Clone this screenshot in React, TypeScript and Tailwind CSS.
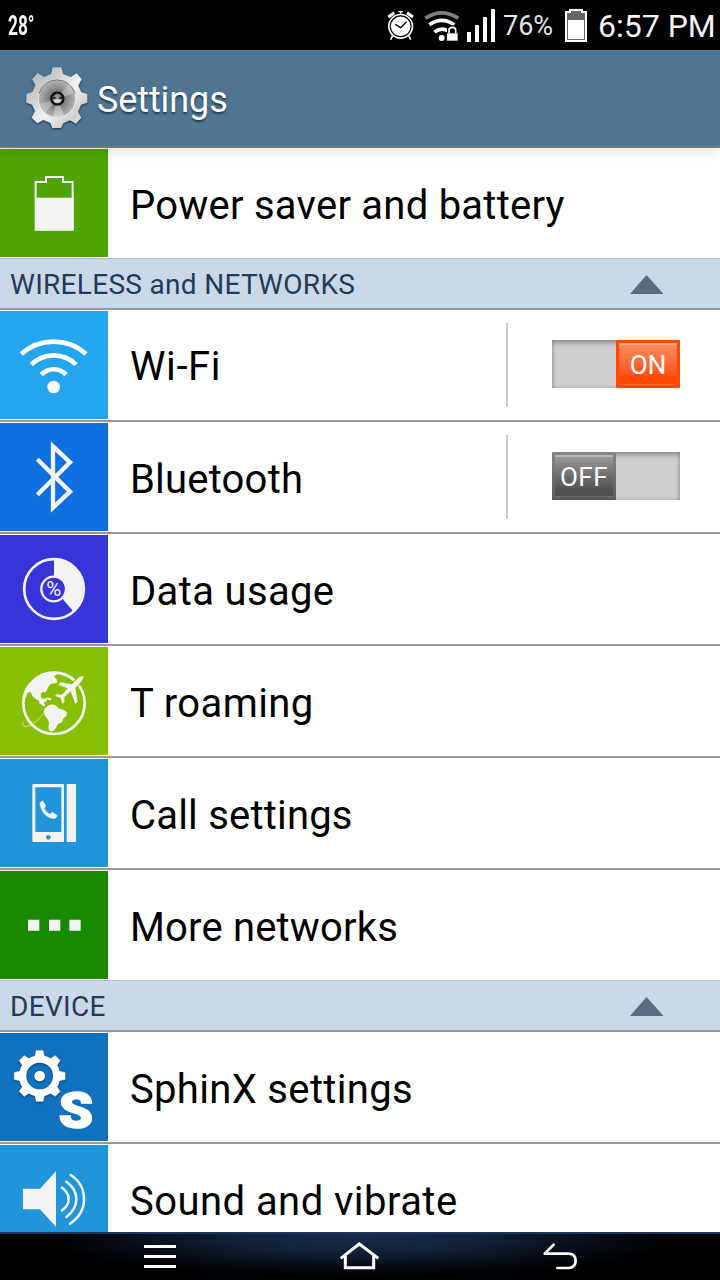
import type { ReactNode } from 'react';

type RowProps = {
  label: string;
  color: string;
  icon: ReactNode;
  last?: boolean;
  labelClass: string;
  toggle?: 'on' | 'off';
};

const GEAR_TEETH = [0, 45, 90, 135, 180, 225, 270, 315];

function AlarmIcon() {
  return (
    <svg className="h-[32px] w-[28px]" viewBox="20 28 84 96" fill="none" stroke="#fff">
      <circle cx="61" cy="80" r="35.5" strokeWidth="5" />
      <circle cx="61" cy="80" r="29.5" fill="#fff" stroke="none" />
      <path d="M45 74l16 10 18-18" stroke="#000" strokeWidth="4" />
      <path d="M61 36v9M54 36h14" strokeWidth="4" />
      <path d="M24 52L42 39M98 52L80 39" strokeWidth="9" />
      <path d="M37 108l-6 12M85 108l6 12" strokeWidth="5" />
    </svg>
  );
}

function StatusWifiIcon() {
  return (
    <svg className="h-[32px] w-[36px]" viewBox="130 28 108 96" fill="none">
      <path d="M134 56Q183 23 233 56" stroke="#808080" strokeWidth="11" />
      <path d="M146 75Q183 49 221 75" stroke="#fff" strokeWidth="11" />
      <path d="M161 97Q183 81 202 94" stroke="#fff" strokeWidth="11" />
      <circle cx="183" cy="115" r="9" fill="#fff" />
      <path d="M205 101V91a10 8 0 0 1 20 0v10" stroke="#000" strokeWidth="12" />
      <rect x="196" y="99" width="37" height="25" fill="#000" />
      <path d="M205 101V91a10 8 0 0 1 20 0v10" stroke="#fff" strokeWidth="5" />
      <rect x="199" y="101" width="32" height="22" fill="#fff" />
    </svg>
  );
}

function SignalIcon() {
  return (
    <svg className="h-[33px] w-[28px]" viewBox="261 27 84 99" fill="#fff">
      <path d="M261 96h12v30h-12zM285 75h12v51h-12zM309 51h12v75h-12zM333 27h12v99h-12z" />
    </svg>
  );
}

function StatusBatteryIcon() {
  return (
    <svg className="h-[33px] w-[22px]" viewBox="555 27 66 99">
      <path d="M555 33h12v-6h42v6h12v93h-66z" fill="#fff" />
      <path d="M561 39h12v-6h30v6h12v81h-54z" fill="#666" />
      <rect x="564" y="60" width="48" height="57" fill="#fff" />
    </svg>
  );
}

function SteelGearIcon() {
  return (
    <svg className="h-[66px] w-[66px] drop-shadow-[0_1px_1px_rgba(0,0,0,0.6)]" viewBox="72 195 198 198">
      <defs>
        <linearGradient id="steel" x1="0" y1="0" x2="1" y2="1">
          <stop offset="0" stopColor="#aeaeae" />
          <stop offset="0.35" stopColor="#d2d2d2" />
          <stop offset="0.55" stopColor="#f2f2f2" />
          <stop offset="0.8" stopColor="#cfcfcf" />
          <stop offset="1" stopColor="#e8e8e8" />
        </linearGradient>
        <radialGradient id="dish">
          <stop offset="0.3" stopColor="#6f6f6f" />
          <stop offset="0.6" stopColor="#8f8f8f" />
          <stop offset="1" stopColor="#b4b4b4" />
        </radialGradient>
      </defs>
      <path
        d="M158 202h26l6 20 22 9 18-11 15 17-10 20 9 20 18 5v26l-19 6-9 21 10 18-16 18-18-10-20 9-7 14h-26l-6-15-21-9-18 10-17-17 10-20-9-19-17-6v-26l18-6 9-20-10-18 17-19 19 12 21-9z"
        fill="url(#steel)"
      />
      <circle cx="171" cy="296" r="56" fill="url(#dish)" stroke="#e9e9e9" strokeWidth="2.5" />
      <path d="M117 281A56 56 0 0 1 225 281" fill="none" stroke="#707070" strokeWidth="3" />
      <path d="M171 296L206 252 223 280zM171 296l-35 42-16-26z" fill="#e8e8e8" opacity="0.35" />
      <path d="M171 296l-12 54q18 4 34-2z" fill="#eee" opacity="0.45" />
      <circle cx="172" cy="296" r="18" fill="#7a7a7a" stroke="#111" strokeWidth="7" />
      <path d="M158 291h28v5h-28z" fill="#222" />
      <circle cx="172" cy="291" r="6" fill="#999" />
      <path d="M160 300q12-6 24 0l-5 8h-14z" fill="#d4d4d4" />
    </svg>
  );
}

function BatteryIcon() {
  return (
    <svg className="size-[108px]" viewBox="0 12 324 324">
      <path d="M107 254V111h31V96h51v15h29v143z" fill="none" stroke="#f4f4f4" strokeWidth="6" />
      <rect x="105" y="158" width="116" height="98" fill="#f4f4f4" />
    </svg>
  );
}

function WifiIcon() {
  return (
    <svg className="size-[108px]" viewBox="0 9 324 324" fill="none" stroke="#fff" strokeWidth="14">
      <path d="M64 138a145 145 0 0 1 194 0" />
      <path d="M94 170a94 94 0 0 1 134 0" />
      <path d="M124 200a50 50 0 0 1 74 0" />
      <circle cx="161" cy="237" r="19" fill="#fff" stroke="none" />
    </svg>
  );
}

function BluetoothIcon() {
  return (
    <svg className="size-[108px]" viewBox="0 345 324 324">
      <path
        d="M112 454L210 551 159 599V415L210 463 112 560"
        fill="none"
        stroke="#f4f4f4"
        strokeWidth="13"
        strokeMiterlimit="10"
      />
    </svg>
  );
}

function DataIcon() {
  return (
    <svg className="size-[108px]" viewBox="0 9 324 324">
      <circle cx="162" cy="171" r="89.5" fill="none" stroke="#f4f4f4" strokeWidth="8" />
      <path d="M162 171V82A89 89 0 0 1 219 237z" fill="#f4f4f4" />
      <circle cx="161" cy="171" r="37" fill="#3834da" stroke="#f4f4f4" strokeWidth="7" />
      <text
        x="139"
        y="192"
        fontSize="58"
        textLength="45"
        lengthAdjust="spacingAndGlyphs"
        fill="#f4f4f4"
        className="font-[Roboto]"
      >
        %
      </text>
    </svg>
  );
}

function GlobeIcon() {
  return (
    <svg className="size-[108px]" viewBox="0 9 324 324">
      <circle cx="162" cy="178" r="92" fill="none" stroke="#f4f4f4" strokeWidth="8" />
      <path
        d="M104 102L128 89 168 84 172 90 162 97 170 106 172 116 152 120 146 127 140 140 134 146 129 143 122 150 123 160 130 165 142 163 140 172 128 176 116 170 108 166 99 158 91 143 82 146 78 160 70 168 73 145 84 122z"
        fill="#f4f4f4"
      />
      <path d="M138 160l14 3 3 6-10-2zM119 169l12 6 5 10-5 2-14-10z" fill="#f4f4f4" />
      <path
        d="M134 193L143 186 154 181 167 184 176 193 192 198 201 205 199 216 190 223 186 235 174 240 168 252 159 262 149 262 145 252 147 236 143 226 135 216 131 204z"
        fill="#f4f4f4"
      />
      <path d="M132 208q-21 28-46 38-14 4-19-4 0-7 4-8" fill="none" stroke="#dcecb4" strokeWidth="2.5" />
      <path
        d="M250 96Q240 96 229 107L215 121 182 115 175 122 203 133 186 152 170 151 165 156 181 161 187 179 193 175 193 159 212 142 226 180 233 174 226 132 240 117Q251 105 250 96z"
        fill="#f4f4f4"
        stroke="#88bf03"
        strokeWidth="5"
        paintOrder="stroke"
      />
    </svg>
  );
}

function CallIcon() {
  return (
    <svg className="size-[108px]" viewBox="0 9 324 324" fill="#f4f4f4">
      <path fillRule="evenodd" d="M101 84h88q3 0 3 3v168q0 3-3 3h-88q-4 0-4-3V87q0-3 4-3zm5 10v134h78V94z" />
      <rect x="200" y="84" width="28" height="174" rx="3" />
      <circle cx="145" cy="244" r="7" fill="#2095d9" />
      <path d="M119 141q4-7 10-7l9 15-5 8q5 12 17 17l7-6 15 10q0 6-7 10-15 2-30-12-15-15-16-35z" />
    </svg>
  );
}

function MoreIcon() {
  return (
    <svg className="size-[108px]" viewBox="0 345 324 324" fill="#f4f4f4">
      <path d="M84 491h34v33H84zM147 491h34v33h-34zM208 491h34v33h-34z" />
    </svg>
  );
}

function SphinxIcon() {
  return (
    <svg className="size-[108px]" viewBox="0 174 324 324">
      <g className="drop-shadow-[0_3px_3px_rgba(0,0,0,0.45)]">
        <circle cx="119" cy="303" r="51" fill="none" stroke="#fff" strokeWidth="22" />
        {GEAR_TEETH.map((angle) => (
          <path
            key={angle}
            d="M105 245l4-18h20l4 18z"
            fill="#fff"
            stroke="#fff"
            strokeWidth="2"
            transform={`rotate(${angle} 119 303)`}
          />
        ))}
        <circle cx="119" cy="303" r="16" fill="#fff" />
      </g>
      <text
        x="176"
        y="459"
        fontSize="148"
        fontWeight="900"
        textLength="103"
        lengthAdjust="spacingAndGlyphs"
        fill="#fff"
        stroke="#fff"
        strokeWidth="5"
        className="font-[Roboto]"
      >
        S
      </text>
    </svg>
  );
}

function SoundIcon() {
  return (
    <svg className="size-[108px]" viewBox="0 15 324 324" fill="none" stroke="#f4f4f4" strokeWidth="7.5" strokeLinecap="round">
      <path d="M69 146h51l48-53v168l-48-53H69z" fill="#f4f4f4" stroke="none" />
      <path d="M186 143q20 14 20 34t-20 34" />
      <path d="M199 125q30 21 30 52t-30 54" />
      <path d="M212 105q40 26 40 72t-42 74" />
    </svg>
  );
}

function Toggle({ state }: { state: 'on' | 'off' }) {
  return (
    <div
      className={`mr-10 mb-0.5 flex h-12 w-32 bg-[#cfcfcf] shadow-[inset_0_3px_5px_rgba(0,0,0,0.28),inset_0_0_4px_rgba(0,0,0,0.18)] ${
        state === 'on' ? 'justify-end' : 'justify-start'
      }`}
    >
      {state === 'on' ? (
        <div className="h-12 w-16 bg-[#ff4800] p-[3px]">
          <div className="flex h-full items-center justify-center border-t-2 border-b border-t-[#ffa583] border-b-[#ff6c30] bg-linear-to-b from-[#ff8a5c] to-[#ff4800] to-85% pt-0.5 text-[26px] text-white">
            ON
          </div>
        </div>
      ) : (
        <div className="h-12 w-16 bg-linear-to-b from-[#868686] to-[#5b5b5b] p-[3px]">
          <div className="flex h-full items-center justify-center border-t-2 border-b border-t-[#b5b5b5] border-b-[#6c6c6c] bg-linear-to-b from-[#989898] to-[#515151] to-85% pt-0.5 text-[26px] tracking-[0.5px] text-white">
            OFF
          </div>
        </div>
      )}
    </div>
  );
}

function SettingRow({ label, color, icon, last, labelClass, toggle }: RowProps) {
  return (
    <div className={`flex shrink-0 items-center bg-white ${last ? 'h-[110px]' : 'h-[112px] border-b-2 border-[#999]'}`}>
      <div className={`size-[108px] shrink-0 ${color}`}>{icon}</div>
      <div className={`flex-1 pl-[22px] text-[40px] leading-none whitespace-nowrap text-black ${labelClass}`}>
        {label}
      </div>
      {toggle && (
        <>
          <div className="mr-11 h-[84px] w-0.5 bg-[#ccc]" />
          <Toggle state={toggle} />
        </>
      )}
    </div>
  );
}

function SectionHeader({ title, titleClass }: { title: string; titleClass: string }) {
  return (
    <div className="flex h-[52px] shrink-0 items-center justify-between border-t border-b-2 border-t-[#b0bfcb] border-b-[#999] bg-[#cbd8e8] pr-14 pl-2.5">
      <span className={`pt-0.5 text-[28px] leading-none text-[#253a57] ${titleClass}`}>{title}</span>
      <svg className="mt-0.5 h-[19px] w-[34px]" viewBox="0 0 34 19">
        <path d="M16.5 0l17 19H0z" fill="#5b6b80" />
      </svg>
    </div>
  );
}

export default function App() {
  return (
    <div className="flex h-[1280px] w-[720px] flex-col overflow-hidden bg-white font-[Roboto,sans-serif]">
      <div className="flex h-[50px] shrink-0 items-center bg-black text-[#f4f4f4]">
        <span className="ml-2 w-[379px] origin-left scale-x-[0.64] pt-0.5 text-[27px] leading-none font-bold">28°</span>
        <AlarmIcon />
        <span className="ml-[9px] flex">
          <StatusWifiIcon />
        </span>
        <span className="ml-[7px] flex">
          <SignalIcon />
        </span>
        <span className="ml-[8px] w-[54px] pt-[3px] text-[27px] leading-none whitespace-nowrap text-[#e4e4e4]">76%</span>
        <span className="ml-[8px] flex">
          <StatusBatteryIcon />
        </span>
        <span className="ml-[11px] pt-px text-[32px] leading-none whitespace-nowrap">6:57 PM</span>
      </div>

      <header className="relative z-10 flex h-[98px] shrink-0 items-center border-b-2 border-[#7c7774] bg-[#4f7592] pl-6 shadow-[0_2px_14px_rgba(0,0,0,0.14)]">
        <SteelGearIcon />
        <h1 className="ml-[7px] pt-[3px] text-[36px] leading-none tracking-[-0.1px] text-white [text-shadow:0_2px_2px_rgba(0,0,0,0.5)]">
          Settings
        </h1>
      </header>

      <main className="flex min-h-0 flex-1 flex-col overflow-hidden">
        <SettingRow
          label="Power saver and battery"
          color="bg-[#4ea500]"
          icon={<BatteryIcon />}
          labelClass="pt-[5px] tracking-[0.24px]"
          last
        />
        <SectionHeader title="WIRELESS and NETWORKS" titleClass="tracking-[0.3px]" />
        <SettingRow
          label="Wi-Fi"
          color="bg-[#23a5f0]"
          icon={<WifiIcon />}
          labelClass="pt-[3px] tracking-[0.6px]"
          toggle="on"
        />
        <SettingRow
          label="Bluetooth"
          color="bg-[#0e70e0]"
          icon={<BluetoothIcon />}
          labelClass="pt-[5px] tracking-[0.2px]"
          toggle="off"
        />
        <SettingRow label="Data usage" color="bg-[#3834da]" icon={<DataIcon />} labelClass="pt-[5px] tracking-[0.35px]" />
        <SettingRow label="T roaming" color="bg-[#88bf03]" icon={<GlobeIcon />} labelClass="pt-[5px] tracking-[0.4px]" />
        <SettingRow
          label="Call settings"
          color="bg-[#2095d9]"
          icon={<CallIcon />}
          labelClass="pt-[5px] tracking-[0.2px]"
        />
        <SettingRow
          label="More networks"
          color="bg-[#198a00]"
          icon={<MoreIcon />}
          labelClass="pt-[5px] tracking-[0.17px]"
          last
        />
        <SectionHeader title="DEVICE" titleClass="tracking-[0.3px]" />
        <SettingRow
          label="SphinX settings"
          color="bg-[#1271bf]"
          icon={<SphinxIcon />}
          labelClass="pt-[5px] tracking-[0.33px]"
        />
        <SettingRow
          label="Sound and vibrate"
          color="bg-[#2095d9]"
          icon={<SoundIcon />}
          labelClass="pt-[5px] tracking-[0.45px]"
        />
      </main>

      <nav className="flex h-12 shrink-0 items-center border-t-2 border-[#1d3658] bg-black bg-[radial-gradient(ellipse_330px_44px_at_50%_0%,#182c49,#13243c_35%,#060b13_75%,#000)] pl-36">
        <svg className="mb-px h-[23px] w-8" viewBox="0 0 96 69" fill="#fff">
          <path d="M0 0h96v9H0zM0 30h96v9H0zM0 60h96v9H0z" />
        </svg>
        <svg
          className="mb-0.5 ml-[162px] h-[30px] w-[42px]"
          viewBox="54 62 126 90"
          fill="none"
          stroke="#fff"
          strokeWidth="9"
        >
          <path d="M62 114l56-43 57 43M76 105v37h85v-37" />
        </svg>
        <svg
          className="mb-0.5 ml-[160px] h-[30px] w-[40px]"
          viewBox="660 62 120 90"
          fill="none"
          stroke="#fff"
          strokeWidth="8"
          strokeLinejoin="round"
          strokeLinecap="round"
        >
          <path d="M701 73l-27 27h73q20 2 20 21t-20 22h-35" />
        </svg>
      </nav>
    </div>
  );
}
